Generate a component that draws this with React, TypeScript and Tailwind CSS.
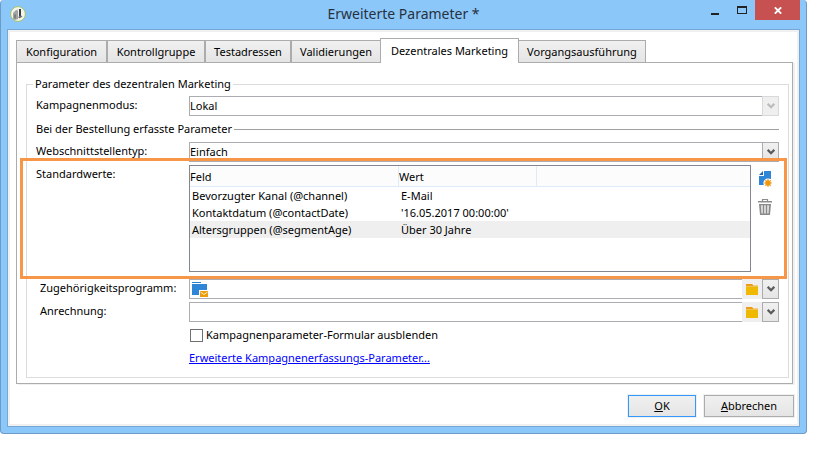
import type { ReactNode } from 'react'

function AppIcon() {
  return (
    <svg className="size-4 shrink-0" viewBox="0 0 16 16" aria-hidden="true">
      <circle cx="8" cy="8" r="7.4" fill="#f4f5ef" stroke="#a3c264" strokeWidth="1" />
      <path d="M3 7l3-3h2v9l-3 1-2-1z" fill="#a2a4a2" />
      <path d="M4 9l2-1v5l-2-1z" fill="#7d807e" />
      <path d="M9 3h2v7l-2 1z" fill="#3d4042" />
      <path d="M8 11l3-1.500 1.500 1-3 2z" fill="#6b6e70" />
      <path d="M6 4l2-1v2z" fill="#c9cbc7" />
    </svg>
  )
}

function Chevron({ muted = false }: { muted?: boolean }) {
  return (
    <svg className="h-[6px] w-2" viewBox="0 0 8 6" aria-hidden="true">
      <path d="M0.700 0.800L4 4.200L7.300 0.800" fill="none" stroke={muted ? '#bcbcbc' : '#5a5a5a'} strokeWidth="2.200" />
    </svg>
  )
}

function FolderIcon() {
  return (
    <svg className="h-[11px] w-3" viewBox="0 0 12 11" aria-hidden="true">
      <path d="M0 0h6l1 1v1H0z" fill="#ee9a1a" />
      <path d="M7 1h5v1H7z" fill="#f0cf84" />
      <path d="M0 2h12v9H0z" fill="#eeb900" />
      <path d="M0 2h12v1H0z" fill="#e9c54c" />
    </svg>
  )
}

function ProgramIcon() {
  return (
    <svg className="h-[15px] w-4" viewBox="0 0 16 15" aria-hidden="true">
      <path d="M0 0h9v1H0z" fill="#2b7fd0" />
      <path d="M0 2h15v6H7v5H0z" fill="#2f86d6" />
      <path d="M8 9h8v6H8z" fill="#ec9c0c" />
      <path d="M8.500 10l3.500 2.500 3.500-2.500" fill="none" stroke="#fff2d4" strokeWidth="1" />
    </svg>
  )
}

function NewIcon() {
  return (
    <svg className="h-4 w-[13px]" viewBox="0 0 13 16" aria-hidden="true">
      <path d="M5 0h7v8H9L6 10v4H0V5h5z" fill="#2f86d6" />
      <path d="M4 0v4H0z" fill="#2068b0" />
      <circle cx="9" cy="12" r="4.600" fill="#fff" />
      <path d="M9 8v8M5 12h8M6.200 9.200l5.600 5.600M11.800 9.200l-5.600 5.600" stroke="#f0a63a" strokeWidth="1.200" />
      <circle cx="9" cy="12" r="2.700" fill="#ee960c" />
    </svg>
  )
}

function TrashIcon() {
  return (
    <svg className="h-4 w-[14px]" viewBox="0 0 14 16" aria-hidden="true">
      <path d="M4.500 2.500v-2h5v2" fill="none" stroke="#8c8c8c" strokeWidth="1.200" />
      <path d="M0 2h14v1.500H0z" fill="#8c8c8c" />
      <path d="M1 5h12l-1 11H2z" fill="#8a8a8a" />
      <path d="M2.800 6.200h8.400l-.6 8.300H3.400z" fill="#dcdcdc" />
      <path d="M5.500 6v9M8.500 6v9" stroke="#8a8a8a" strokeWidth="1.200" />
    </svg>
  )
}

const tabs = [
  { label: 'Konfiguration', width: 'w-[91px]', active: false },
  { label: 'Kontrollgruppe', width: 'w-[98px]', active: false },
  { label: 'Testadressen', width: 'w-[86px]', active: false },
  { label: 'Validierungen', width: 'w-[90px]', active: false },
  { label: 'Dezentrales Marketing', width: 'w-[139px]', active: true },
  { label: 'Vorgangsausführung', width: 'w-[128px]', active: false },
]

const rows = [
  { field: 'Bevorzugter Kanal (@channel)', value: 'E-Mail', selected: false },
  { field: 'Kontaktdatum (@contactDate)', value: "'16.05.2017 00:00:00'", selected: false },
  { field: 'Altersgruppen (@segmentAge)', value: 'Über 30 Jahre', selected: true },
]

function SelectField({ id, label, value, disabled = false }: { id: string; label: string; value: string; disabled?: boolean }) {
  return (
    <div className="flex h-5">
      <label htmlFor={id} className="w-[153px] shrink-0">{label}</label>
      <div className="relative min-w-0 flex-1">
        <select
          id={id}
          disabled={disabled}
          className="block h-5 w-full appearance-none border border-[#abadb3] bg-white text-black opacity-100"
        >
          <option>{value}</option>
        </select>
        <span
          className={
            'pointer-events-none absolute inset-y-0 right-0 flex w-[17px] items-center justify-center border ' +
            (disabled ? 'border-[#d9d9d9] bg-[#efefef]' : 'border-[#acacac] bg-linear-to-b from-[#f0f0f0] to-[#e5e5e5]')
          }
        >
          <Chevron muted={disabled} />
        </span>
      </div>
    </div>
  )
}

function LinkField({ id, label, icon }: { id: string; label: string; icon?: ReactNode }) {
  return (
    <div className="flex h-5">
      <label htmlFor={id} className="w-[153px] shrink-0 pl-1">{label}</label>
      <div className="flex min-w-0 flex-1">
        <div className="flex min-w-0 flex-1 items-center border border-r-0 border-[#abadb3] bg-white pl-[2px]">
          {icon}
          <input id={id} type="text" className="h-full min-w-0 flex-1 px-1 outline-none" />
        </div>
        <button type="button" aria-label="Ordner wählen" className="flex w-5 items-center justify-center bg-[#efefef]">
          <FolderIcon />
        </button>
        <button
          type="button"
          aria-label="Liste öffnen"
          className="flex w-[17px] items-center justify-center border border-[#acacac] bg-linear-to-b from-[#f0f0f0] to-[#e5e5e5]"
        >
          <Chevron />
        </button>
      </div>
    </div>
  )
}

export default function App() {
  return (
    <div className="min-h-screen bg-white pr-[31px] font-['Noto_Sans','Open_Sans',sans-serif] text-[11px] leading-[18px] text-black">
      <div className="rounded-[4px] border border-t-0 border-[#6c9bc6] bg-[#8cc7fa] px-[6px] pb-[6px]">
        <header className="flex h-[29px] items-start">
          <div className="flex w-[98px] pt-[6px] pl-[3px]">
            <AppIcon />
          </div>
          <h1 className="flex-1 pt-1 text-center text-[14px] leading-5 text-[#26323e]">Erweiterte Parameter *</h1>
          <div className="flex w-[98px] justify-end">
            <button type="button" aria-label="Minimieren" className="flex h-5 w-[27px] items-center justify-center">
              <svg className="h-[11px] w-2" viewBox="0 0 8 11" aria-hidden="true">
                <path d="M0 8h8v2H0z" fill="#222" />
              </svg>
            </button>
            <button type="button" aria-label="Maximieren" className="flex h-5 w-[27px] items-center justify-center">
              <svg className="h-2 w-[10px]" viewBox="0 0 10 8" aria-hidden="true">
                <path d="M0 0h10v8H0zM1 2v5h8V2z" fill="#222" fillRule="evenodd" />
              </svg>
            </button>
            <button type="button" aria-label="Schließen" className="flex h-5 w-[45px] items-center justify-center bg-[#c75050]">
              <svg className="h-[7px] w-2" viewBox="0 0 8 7" aria-hidden="true">
                <path d="M0.800 0.300L7.200 6.700M7.200 0.300L0.800 6.700" stroke="#fff" strokeWidth="1.800" />
              </svg>
            </button>
          </div>
        </header>

        <main className="border border-[#76a7d6] bg-white">
          <div className="border-2 border-[#f0f0f0] pt-[6px] pr-1 pb-[7px] pl-[6px]">
            <div role="tablist" className="relative flex items-end">
              {tabs.map((tab) => (
                <button
                  key={tab.label}
                  type="button"
                  role="tab"
                  aria-selected={tab.active}
                  className={
                    tab.width +
                    (tab.active
                      ? ' relative -mx-px -mb-px h-[25px] border border-b-0 border-[#acacac] bg-white whitespace-nowrap'
                      : ' h-[22px] border border-b-0 border-[#acacac] bg-linear-to-b from-[#f0f0f0] to-[#e5e5e5] whitespace-nowrap')
                  }
                >
                  {tab.label}
                </button>
              ))}
            </div>

            <div className="border border-[#acacac] pt-3 pr-[3px] pb-[5px] pl-[9px] shadow-[2px_1px_0_#f0f0f0]">
              <fieldset className="min-w-0 border border-[#dcdcdc] px-[9px] pb-[10px]">
                <legend className="-ml-[3px] px-[2px]">Parameter des dezentralen Marketing</legend>
                <div className="flex flex-col pt-[3px]">
                  <SelectField id="mode" label="Kampagnenmodus:" value="Lokal" disabled />
                  <div className="flex h-[26px] items-center gap-[2px]">
                    <h2>Bei der Bestellung erfasste Parameter</h2>
                    <div className="h-px flex-1 bg-[#a0a0a0]" />
                  </div>
                  <SelectField id="interface" label="Webschnittstellentyp:" value="Einfach" />

                  <section className="relative mt-[3px] mb-[7px] flex">
                    <div className="pointer-events-none absolute -top-[7px] -right-[8px] -bottom-[7px] -left-[16px] border-[3px] border-[#f79646]" />
                    <h3 className="w-[153px] shrink-0">Standardwerte:</h3>
                    <div className="h-[107px] min-w-0 flex-1 border border-[#828790]">
                      <table className="w-full table-fixed border-separate border-spacing-0 text-left leading-[17px]" aria-label="Standardwerte">
                        <colgroup>
                          <col className="w-[209px]" />
                          <col className="w-[138px]" />
                          <col />
                        </colgroup>
                        <thead>
                          <tr className="h-[21px] bg-[#fcfcfc]">
                            <th className="border-r border-b border-[#deebfa] p-0 pt-px font-normal">Feld</th>
                            <th className="border-r border-b border-[#deebfa] p-0 pt-px font-normal">Wert</th>
                            <td className="border-b border-[#deebfa] p-0" />
                          </tr>
                        </thead>
                        <tbody>
                          {rows.map((row) => (
                            <tr key={row.field} className={row.selected ? 'h-[17px] bg-[#efefef]' : 'h-[17px]'}>
                              <td className="p-0 pl-[2px]">{row.field}</td>
                              <td className="p-0 pl-[2px]">{row.value}</td>
                              <td className="p-0" />
                            </tr>
                          ))}
                        </tbody>
                      </table>
                    </div>
                    <div className="flex w-7 shrink-0 flex-col items-center gap-3 pt-[6px]">
                      <button type="button" aria-label="Hinzufügen" className="flex">
                        <NewIcon />
                      </button>
                      <button type="button" aria-label="Löschen" className="flex">
                        <TrashIcon />
                      </button>
                    </div>
                  </section>

                  <LinkField id="program" label="Zugehörigkeitsprogramm:" icon={<ProgramIcon />} />
                  <div className="h-[3px]" />
                  <LinkField id="charge" label="Anrechnung:" />

                  <div className="mt-1 flex flex-col items-start gap-[5px] pl-[153px]">
                    <label className="flex items-center gap-[3px] pl-px">
                      <input type="checkbox" className="size-[13px] appearance-none border border-[#707070] bg-white checked:bg-[#707070]" />
                      Kampagnenparameter-Formular ausblenden
                    </label>
                    <a href="#" className="text-[#0000ff] underline">
                      Erweiterte Kampagnenerfassungs-Parameter...
                    </a>
                  </div>
                </div>
              </fieldset>
            </div>

            <footer className="-mr-px mt-[11px] flex justify-end gap-2">
              <button type="button" className="h-[22px] w-[68px] border border-[#3399ff] bg-linear-to-b from-[#f0f0f0] to-[#e5e5e5] shadow-[0_0_0_1px_#f0f0f0]">
                <span className="underline">O</span>K
              </button>
              <button type="button" className="h-[22px] w-[90px] border border-[#acacac] bg-linear-to-b from-[#f0f0f0] to-[#e5e5e5] shadow-[0_0_0_1px_#f0f0f0]">
                <span className="underline">A</span>bbrechen
              </button>
            </footer>
          </div>
        </main>
      </div>
    </div>
  )
}
